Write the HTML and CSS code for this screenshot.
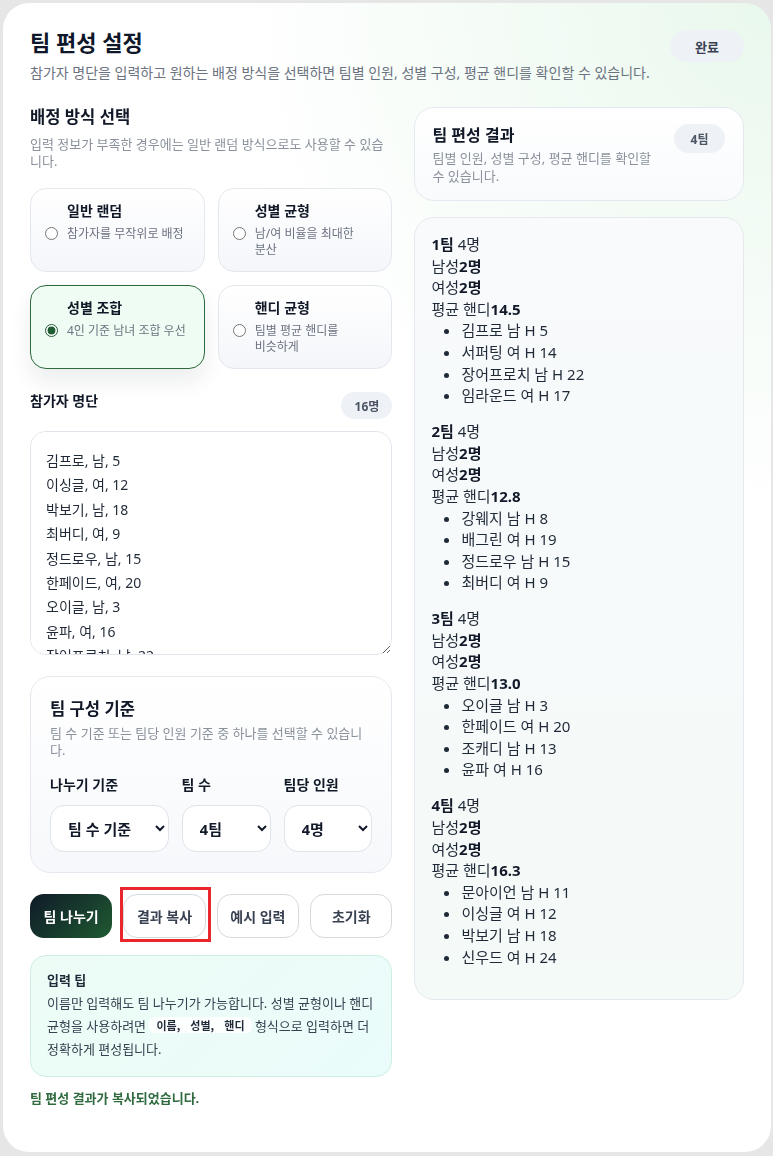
FILE: index.html
```html
<!DOCTYPE html>
<html lang="ko">
<head>
<meta charset="utf-8">
<title>팀 편성 설정</title>
<link rel="stylesheet" href="styles.css">
</head>
<body>
<div class="app">
  <header class="top">
    <div class="top-text">
      <h1 class="title">팀 편성 설정</h1>
      <p class="sub">참가자 명단을 입력하고 원하는 배정 방식을 선택하면 팀별 인원, 성별 구성, 평균 핸디를 확인할 수 있습니다.</p>
    </div>
    <button class="done" type="button">완료</button>
  </header>

  <div class="main">
    <section class="left">
      <h2 class="sec">배정 방식 선택</h2>
      <p class="sec-desc">입력 정보가 부족한 경우에는 일반 랜덤 방식으로도 사용할 수 있습니다.</p>

      <div class="options">
        <label class="option">
          <span class="opt-title">일반 랜덤</span>
          <input class="radio" type="radio" name="mode">
          <span class="opt-desc">참가자를 무작위로 배정</span>
        </label>
        <label class="option">
          <span class="opt-title">성별 균형</span>
          <input class="radio" type="radio" name="mode">
          <span class="opt-desc">남/여 비율을 최대한 분산</span>
        </label>
        <label class="option active">
          <span class="opt-title">성별 조합</span>
          <input class="radio" type="radio" name="mode" checked>
          <span class="opt-desc">4인 기준 남녀 조합 우선</span>
        </label>
        <label class="option">
          <span class="opt-title">핸디 균형</span>
          <input class="radio" type="radio" name="mode">
          <span class="opt-desc">팀별 평균 핸디를 비슷하게</span>
        </label>
      </div>

      <div class="roster-head">
        <h3 class="roster-title">참가자 명단</h3>
        <span class="pill">16명</span>
      </div>
      <textarea class="roster">김프로, 남, 5
이싱글, 여, 12
박보기, 남, 18
최버디, 여, 9
정드로우, 남, 15
한페이드, 여, 20
오이글, 남, 3
윤파, 여, 16
장어프로치, 남, 22
서퍼팅, 여, 14
강웨지, 남, 8
배그린, 여, 19
조캐디, 남, 13
임라운드, 여, 17
문아이언, 남, 11
신우드, 여, 24</textarea>

      <div class="panel">
        <h2 class="sec">팀 구성 기준</h2>
        <p class="panel-desc">팀 수 기준 또는 팀당 인원 기준 중 하나를 선택할 수 있습니다.</p>
        <div class="fields">
          <div class="field">
            <span class="field-label">나누기 기준</span>
            <select class="sel"><option>팀 수 기준</option><option>팀당 인원 기준</option></select>
          </div>
          <div class="field">
            <span class="field-label">팀 수</span>
            <select class="sel"><option>4팀</option></select>
          </div>
          <div class="field">
            <span class="field-label">팀당 인원</span>
            <select class="sel"><option>4명</option></select>
          </div>
        </div>
      </div>

      <div class="actions">
        <button class="btn primary" type="button">팀 나누기</button>
        <button class="btn copy" type="button">결과 복사<span class="annot"></span></button>
        <button class="btn" type="button">예시 입력</button>
        <button class="btn" type="button">초기화</button>
      </div>

      <div class="tip">
        <div class="tip-title">입력 팁</div>
        <p class="tip-text">이름만 입력해도 팀 나누기가 가능합니다. 성별 균형이나 핸디 균형을 사용하려면 <code class="chip">이름, 성별, 핸디</code> 형식으로 입력하면 더 정확하게 편성됩니다.</p>
      </div>

      <p class="status">팀 편성 결과가 복사되었습니다.</p>
    </section>

    <section class="right">
      <div class="res-head">
        <div class="res-head-text">
          <h2 class="res-title">팀 편성 결과</h2>
          <p class="res-desc">팀별 인원, 성별 구성, 평균 핸디를 확인할 수 있습니다.</p>
        </div>
        <span class="pill pill-team">4팀</span>
      </div>

      <div class="results">
        <div class="team">
          <div><strong>1팀</strong> 4명</div>
          <div>남성<strong>2명</strong></div>
          <div>여성<strong>2명</strong></div>
          <div>평균 핸디<strong>14.5</strong></div>
          <ul class="members">
            <li>김프로 남 H 5</li>
            <li>서퍼팅 여 H 14</li>
            <li>장어프로치 남 H 22</li>
            <li>임라운드 여 H 17</li>
          </ul>
        </div>
        <div class="team">
          <div><strong>2팀</strong> 4명</div>
          <div>남성<strong>2명</strong></div>
          <div>여성<strong>2명</strong></div>
          <div>평균 핸디<strong>12.8</strong></div>
          <ul class="members">
            <li>강웨지 남 H 8</li>
            <li>배그린 여 H 19</li>
            <li>정드로우 남 H 15</li>
            <li>최버디 여 H 9</li>
          </ul>
        </div>
        <div class="team">
          <div><strong>3팀</strong> 4명</div>
          <div>남성<strong>2명</strong></div>
          <div>여성<strong>2명</strong></div>
          <div>평균 핸디<strong>13.0</strong></div>
          <ul class="members">
            <li>오이글 남 H 3</li>
            <li>한페이드 여 H 20</li>
            <li>조캐디 남 H 13</li>
            <li>윤파 여 H 16</li>
          </ul>
        </div>
        <div class="team">
          <div><strong>4팀</strong> 4명</div>
          <div>남성<strong>2명</strong></div>
          <div>여성<strong>2명</strong></div>
          <div>평균 핸디<strong>16.3</strong></div>
          <ul class="members">
            <li>문아이언 남 H 11</li>
            <li>이싱글 여 H 12</li>
            <li>박보기 남 H 18</li>
            <li>신우드 여 H 24</li>
          </ul>
        </div>
      </div>
    </section>
  </div>
</div>
</body>
</html>
```

FILE: styles.css
```css
* { box-sizing: border-box; }

html, body {
  margin: 0;
  padding: 0;
}

body {
  background: #e6e6e6;
  font-family: "Noto Sans", "Noto Sans CJK KR", sans-serif;
  color: #111827;
}

.app {
  margin: 3px 2px 4px 3px;
  height: 1149px;
  border-radius: 26px;
  padding: 23px 27px 0 27px;
  background:
    radial-gradient(ellipse 70% 45% at 100% 0%, #e9f8ed 0%, rgba(255, 255, 255, 0) 100%),
    #ffffff;
}

/* header */
.top {
  display: flex;
  justify-content: space-between;
  align-items: flex-start;
  gap: 8px;
}

.title {
  margin: 0;
  font-size: 22px;
  line-height: 32px;
  font-weight: 700;
  color: #0f172a;
}

.sub {
  margin: 5px 0 0;
  font-size: 14px;
  line-height: 20px;
  color: #6b7280;
}

.done {
  margin-top: 4px;
  flex: none;
  width: 74px;
  height: 32px;
  border: 0;
  border-radius: 16px;
  background: #eef2f6;
  font: 700 13px "Noto Sans", "Noto Sans CJK KR", sans-serif;
  color: #374151;
}

/* main grid */
.main {
  display: grid;
  grid-template-columns: 1.1fr 1fr;
  column-gap: 22px;
  align-items: start;
  margin-top: 22px;
}

.sec {
  margin: 0;
  font-size: 16.6px;
  line-height: 24px;
  font-weight: 700;
  color: #111827;
}

.sec-desc {
  margin: 7px 0 0;
  font-size: 13px;
  line-height: 17px;
  color: #8a919c;
}

/* options */
.options {
  margin-top: 18px;
  display: grid;
  grid-template-columns: 1fr 1fr;
  gap: 13px;
}

.option {
  display: grid;
  grid-template-columns: 13px 1fr;
  column-gap: 9px;
  row-gap: 5px;
  align-content: start;
  padding: 12px 18px 13px 14px;
  border: 1px solid #e3e7ee;
  border-radius: 16px;
  background: linear-gradient(180deg, #ffffff 0%, #f4f6fa 100%);
}

.option.active {
  border-color: #2d6a3e;
  background: #effcf3;
  box-shadow: 0 12px 22px rgba(15, 23, 42, 0.08);
}

.opt-title {
  grid-column: 2;
  grid-row: 1;
  font-size: 14px;
  line-height: 20px;
  font-weight: 700;
  color: #111827;
}

.radio {
  grid-column: 1;
  grid-row: 2;
  align-self: start;
  width: 13px;
  height: 13px;
  margin: 1px 0 0;
  accent-color: #1f5c33;
}

.opt-desc {
  grid-column: 2;
  grid-row: 2;
  font-size: 12px;
  line-height: 16px;
  color: #6b7280;
  word-break: keep-all;
}

/* roster */
.roster-head {
  display: flex;
  justify-content: space-between;
  align-items: flex-start;
  margin-top: 22px;
}

.roster-title {
  margin: 0;
  font-size: 14px;
  line-height: 20px;
  font-weight: 700;
}

.pill {
  display: inline-flex;
  align-items: center;
  justify-content: center;
  margin-top: 1px;
  width: 51px;
  height: 27px;
  border-radius: 14px;
  background: #eef2f6;
  font-size: 12px;
  font-weight: 700;
  color: #4b5563;
}

.roster {
  display: block;
  width: 100%;
  height: 224px;
  margin-top: 12px;
  padding: 17px 15px;
  border: 1px solid #dfe3ea;
  border-radius: 16px;
  background: #ffffff;
  font: 400 14px/24.4px "Noto Sans", "Noto Sans CJK KR", sans-serif;
  color: #1f2937;
  resize: vertical;
  scrollbar-width: none;
  outline: none;
}

/* panel */
.panel {
  margin-top: 21px;
  padding: 20px 19px 20px 19px;
  border: 1px solid #e5e8ee;
  border-radius: 20px;
  background: linear-gradient(180deg, #ffffff 0%, #f6f8fb 100%);
}

.panel-desc {
  margin: 4px 0 0;
  font-size: 13px;
  line-height: 17px;
  color: #8a919c;
}

.fields {
  margin-top: 17px;
  display: grid;
  grid-template-columns: 4fr 3fr 3fr;
  column-gap: 13px;
}

.field {
  display: flex;
  flex-direction: column;
  gap: 11px;
}

.field-label {
  font-size: 14px;
  line-height: 18px;
  font-weight: 700;
  color: #111827;
}

.sel {
  width: 100%;
  height: 47px;
  padding: 0 6px 0 13px;
  border: 1px solid #dfe3ea;
  border-radius: 14px;
  background: #ffffff;
  font: 700 15px "Noto Sans", "Noto Sans CJK KR", sans-serif;
  color: #111827;
}

/* actions */
.actions {
  margin-top: 21px;
  display: grid;
  grid-template-columns: repeat(4, 1fr);
  gap: 11px;
}

.btn {
  height: 44px;
  border: 1px solid #d6d9de;
  border-radius: 14px;
  background: #ffffff;
  font: 700 14px "Noto Sans", "Noto Sans CJK KR", sans-serif;
  color: #374151;
  padding: 0;
}

.btn.primary {
  border: 0;
  background: linear-gradient(135deg, #0f1a28 0%, #1f5a31 100%);
  color: #ffffff;
}

.btn.copy {
  position: relative;
}

.annot {
  position: absolute;
  left: -4px;
  right: -6px;
  top: -8px;
  bottom: -5px;
  border: 3px solid #e8262b;
  pointer-events: none;
}

/* tip */
.tip {
  margin-top: 17px;
  padding: 15px 12px 15px 16px;
  border: 1px solid #cdeee0;
  border-radius: 16px;
  background: linear-gradient(135deg, #edfcf5 0%, #eafcfb 100%);
}

.tip-title {
  font-size: 13px;
  line-height: 18px;
  font-weight: 700;
  color: #1f2937;
}

.tip-text {
  margin: 2.5px 0 0;
  font-size: 13px;
  line-height: 23px;
  color: #374151;
}

.chip {
  display: inline-block;
  padding: 0 7px;
  line-height: 16px;
  vertical-align: 1px;
  border-radius: 6px;
  background: rgba(255, 255, 255, 0.9);
  font-family: "Noto Sans CJK KR", sans-serif;
  font-size: 11px;
  font-weight: 700;
  word-spacing: 7px;
  color: #1f2937;
}

.status {
  margin: 12px 0 0;
  font-size: 13px;
  line-height: 18px;
  font-weight: 700;
  color: #2f6b3e;
}

/* right column */
.right {
  margin-top: 2px;
}

.res-head {
  display: flex;
  align-items: flex-start;
  gap: 11px;
  padding: 16px 18px 15px 17px;
  border: 1px solid #e5e8ee;
  border-radius: 20px;
  background: linear-gradient(180deg, #ffffff 0%, #f8fafc 100%);
}

.res-head-text {
  flex: 1;
  min-width: 0;
}

.res-title {
  margin: 0;
  font-size: 16px;
  line-height: 22px;
  font-weight: 700;
  color: #111827;
}

.res-desc {
  margin: 3px 0 0;
  font-size: 13px;
  line-height: 18px;
  color: #8a919c;
}

.pill-team {
  flex: none;
  margin-top: 0;
  height: 29px;
  border-radius: 15px;
}

.results {
  margin-top: 16px;
  padding: 16px 16px 16px 16px;
  border: 1px solid #e5e8ee;
  border-radius: 20px;
  background: linear-gradient(180deg, #f8fafc 0%, #f4faf8 100%);
  font-size: 15px;
  line-height: 21.6px;
  color: #1f2937;
}

.team {
  margin-bottom: 14.4px;
}

.team strong {
  font-weight: 700;
  color: #111827;
}

.members {
  margin: 0;
  padding-left: 30px;
}
```
